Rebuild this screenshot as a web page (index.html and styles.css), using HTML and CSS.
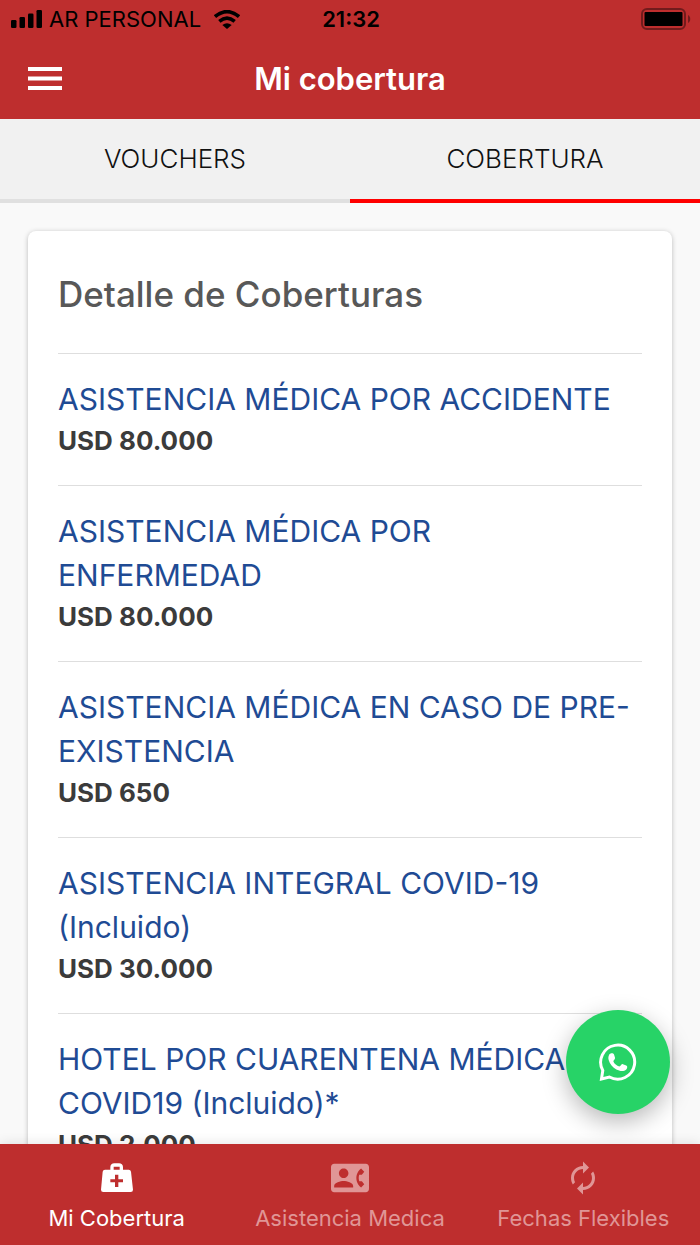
FILE: index.html
```html
<!DOCTYPE html>
<html lang="es">
<head>
  <meta charset="utf-8">
  <meta name="viewport" content="width=device-width, initial-scale=1">
  <title>Mi cobertura</title>
  <link rel="stylesheet" href="styles.css">
</head>
<body>
  <div class="app">
    <header class="top">
      <div class="status">
        <div class="carrier">
          <svg width="31" height="18" viewBox="0 0 31 18" aria-hidden="true">
            <rect x="0" y="10" width="5.5" height="8" rx="1.3"/>
            <rect x="8.5" y="7" width="5.5" height="11" rx="1.3"/>
            <rect x="17" y="3.5" width="5.5" height="14.5" rx="1.3"/>
            <rect x="25.5" y="0" width="5.5" height="18" rx="1.3"/>
          </svg>
          <span>AR PERSONAL</span>
          <svg class="wifi" width="26" height="19" viewBox="0 0 78 57" aria-hidden="true">
            <path d="M3 20Q39-10 75 20M16 34Q39 15 62 34" fill="none" stroke="#000" stroke-width="11"/>
            <path d="M25 45Q39 35 53 45L39 57Z"/>
          </svg>
        </div>
        <time class="clock">21:32</time>
        <svg class="battery" width="50" height="22" viewBox="0 0 50 22" aria-hidden="true">
          <rect x="1" y="1" width="43" height="20" rx="5" fill="none" stroke="#721b1c" stroke-width="2"/>
          <rect x="3.5" y="4" width="38" height="14" rx="1"/>
          <path d="M47 7c3 1.500 3 6.500 0 8z" fill="#721b1c"/>
        </svg>
      </div>
      <div class="titlebar">
        <button class="menu" type="button" aria-label="Menú">
          <svg width="34" height="24" viewBox="0 0 34 24" aria-hidden="true">
            <path d="M0 0h34v4H0zM0 9.500h34v4H0zM0 19h34v4H0z" fill="#fff"/>
          </svg>
        </button>
        <h1 class="title">Mi cobertura</h1>
      </div>
    </header>

    <nav class="tabs" aria-label="Secciones">
      <a class="tab" href="#vouchers">VOUCHERS</a>
      <a class="tab tab-active" href="#cobertura" aria-current="page">COBERTURA</a>
    </nav>

    <main class="content" id="cobertura">
      <section class="card">
        <h2 class="card-title">Detalle de Coberturas</h2>
        <ul class="list">
          <li class="item"><h3 class="name">ASISTENCIA MÉDICA POR ACCIDENTE</h3><p class="amount">USD 80.000</p></li>
          <li class="item"><h3 class="name">ASISTENCIA MÉDICA POR<br>ENFERMEDAD</h3><p class="amount">USD 80.000</p></li>
          <li class="item"><h3 class="name">ASISTENCIA MÉDICA EN CASO DE PRE-<br>EXISTENCIA</h3><p class="amount">USD 650</p></li>
          <li class="item"><h3 class="name">ASISTENCIA INTEGRAL COVID-19<br>(Incluido)</h3><p class="amount">USD 30.000</p></li>
          <li class="item"><h3 class="name">HOTEL POR CUARENTENA MÉDICA<br>COVID19 (Incluido)*</h3><p class="amount">USD 2.000</p></li>
        </ul>
      </section>
    </main>

    <footer class="bottom">
      <button class="fab" type="button" aria-label="WhatsApp">
        <svg width="38" height="38" viewBox="147 128 114 115" aria-hidden="true">
          <path d="M158 211A51.500 51.500 0 1 1 178 231L154 237Z" fill="none" stroke="#fff" stroke-width="9"/>
          <path d="M177 164C180 158 190 158 192 163L195 173C196 178 190 180 190 184C193 191 200 197 208 199C212 199 214 191 219 192L229 196C234 198 232 205 229 208C221 215 209 213 199 208C188 202 179 191 176 180C174 173 175 168 177 164Z" fill="#fff"/>
        </svg>
      </button>
      <nav class="bottom-nav" aria-label="Principal">
        <a class="nav-item nav-active" href="#cobertura" aria-current="page">
          <svg width="32" height="36" viewBox="300 90 96 108" aria-hidden="true">
            <path fill="currentColor" fill-rule="evenodd" d="M328 119V111Q329 100 340 100H354Q365 100 366 111V119H383Q389 119 390 125L396 179Q396 186 389 186H307Q300 186 300 179L305 125Q306 119 312 119ZM338 119H356V110H338ZM342 134V148H328V157H342V171H352V157H366V148H352V134Z"/>
          </svg>
          <span>Mi Cobertura</span>
        </a>
        <a class="nav-item" href="#asistencia">
          <svg width="38" height="36" viewBox="0 0 24 24" aria-hidden="true" preserveAspectRatio="xMidYMid slice">
            <path fill="currentColor" d="M22 3H2C.9 3 0 3.900 0 5v14c0 1.100.9 2 2 2h20c1.100 0 1.990-.9 1.990-2L24 5c0-1.100-.9-2-2-2zM8 6c1.660 0 3 1.340 3 3s-1.340 3-3 3-3-1.340-3-3 1.340-3 3-3zm6 12H2v-1c0-2 4-3.100 6-3.100s6 1.100 6 3.100v1zm3.850-4h1.640L21 16l-1.990 1.990c-1.310-.98-2.280-2.380-2.730-3.990-.18-.64-.28-1.310-.28-2s.1-1.360.28-2c.45-1.620 1.420-3.010 2.730-3.990L21 8l-1.510 2h-1.640c-.22.63-.35 1.300-.35 2s.13 1.370.35 2z"/>
          </svg>
          <span>Asistencia Medica</span>
        </a>
        <a class="nav-item" href="#fechas">
          <svg width="36" height="36" viewBox="0 0 24 24" aria-hidden="true">
            <path fill="currentColor" d="M12 6v3l4-4-4-4v3c-4.420 0-8 3.580-8 8 0 1.570.46 3.030 1.240 4.260L6.700 14.800c-.45-.83-.7-1.790-.7-2.800 0-3.310 2.690-6 6-6zm6.760 1.740L17.300 9.200c.44.84.7 1.790.7 2.800 0 3.310-2.690 6-6 6v-3l-4 4 4 4v-3c4.420 0 8-3.580 8-8 0-1.570-.46-3.030-1.240-4.260z"/>
          </svg>
          <span>Fechas Flexibles</span>
        </a>
      </nav>
    </footer>
  </div>
</body>
</html>
```
FILE: styles.css
```css
* {
  box-sizing: border-box;
}

body {
  margin: 0;
  font-family: Inter, "Liberation Sans", sans-serif;
  color: #3b3b3b;
  background: #f9f9f9;
}

h1, h2, h3, p, ul {
  margin: 0;
  padding: 0;
}

a {
  color: inherit;
  text-decoration: none;
}

button {
  border: 0;
  padding: 0;
  cursor: pointer;
}

svg {
  display: block;
}

.app {
  display: flex;
  flex-direction: column;
  height: 100vh;
}

.top {
  flex: none;
  background: #be2e2e;
}

.status {
  display: grid;
  grid-template-columns: 1fr auto 1fr;
  align-items: center;
  height: 38px;
  padding: 0 9px 0 11px;
  color: #000;
}

.carrier {
  display: flex;
  align-items: center;
  gap: 7px;
  font-size: 22px;
}

.wifi {
  margin-left: 6px;
}

.clock {
  font-size: 22px;
  font-weight: 600;
}

.battery {
  justify-self: end;
}

.titlebar {
  display: grid;
  grid-template-columns: 34px 1fr 34px;
  align-items: center;
  height: 81px;
  padding: 0 28px;
}

.menu {
  background: none;
}

.title {
  grid-column: 2;
  text-align: center;
  font-size: 31px;
  font-weight: 600;
  color: #fff;
}

.tabs {
  flex: none;
  display: grid;
  grid-template-columns: 1fr 1fr;
  background: #f1f1f1;
}

.tab {
  padding: 24px 0;
  border-bottom: 4px solid #e0e0e0;
  text-align: center;
  font-size: 26px;
  font-weight: 300;
  line-height: 32px;
  color: #111;
}

.tab-active {
  border-bottom-color: #f00;
}

.content {
  flex: 1;
  min-height: 0;
  overflow: hidden;
  padding: 28px;
}

.card {
  padding: 36px 30px;
  background: #fff;
  border-radius: 8px;
  box-shadow: 0 1px 5px rgba(0, 0, 0, 0.25);
}

.card-title {
  padding-bottom: 32px;
  font-size: 35px;
  font-weight: 500;
  line-height: 54px;
  color: #585858;
}

.list {
  list-style: none;
}

.item {
  padding: 23px 0 24px;
  border-top: 1px solid #dedede;
}

.name {
  font-size: 30px;
  font-weight: 400;
  line-height: 44px;
  color: #1f4b94;
}

.amount {
  font-size: 26px;
  font-weight: 700;
  line-height: 40px;
}

.bottom {
  flex: none;
  position: relative;
  background: #be2e2e;
  box-shadow: 0 0 12px rgba(0, 0, 0, 0.12);
}

.fab {
  position: absolute;
  right: 30px;
  bottom: calc(100% + 30px);
  display: grid;
  place-items: center;
  width: 104px;
  height: 104px;
  border-radius: 50%;
  background: #27d367;
  box-shadow: 0 8px 24px rgba(0, 0, 0, 0.28);
}

.bottom-nav {
  display: grid;
  grid-template-columns: repeat(3, 1fr);
}

.nav-item {
  display: flex;
  flex-direction: column;
  align-items: center;
  gap: 8px;
  padding: 16px 0 13px;
  font-size: 22px;
  line-height: 28px;
  white-space: nowrap;
  color: #e09696;
}

.nav-active {
  color: #fff;
}
```
